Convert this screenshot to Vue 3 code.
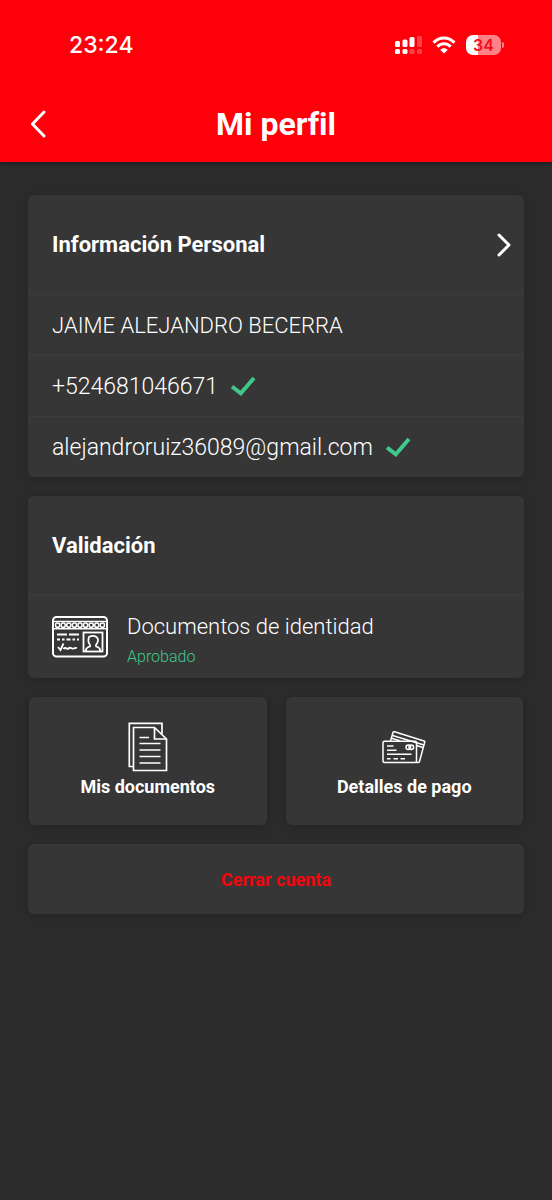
<script setup>
const contactRows = [
  { text: 'JAIME ALEJANDRO BECERRA', verified: false, kind: 'name' },
  { text: '+524681046671', verified: true, kind: 'phone' },
  { text: 'alejandroruiz36089@gmail.com', verified: true, kind: 'email' },
]
const rings = Array.from({ length: 9 }, (_, i) => 5.6 + i * 5.6)
</script>

<template>
  <div class="screen">
    <header class="header">
      <div class="status">
        <span class="time">23:24</span>
        <div class="indicators">
          <svg width="27" height="18" viewBox="0 0 27 18" fill="#fff" aria-hidden="true">
            <rect x="0" y="5" width="5" height="6" rx="1.5" />
            <rect x="7.500" y="3.500" width="5" height="7.500" rx="1.500" />
            <rect x="14.500" y="1" width="5" height="10" rx="1.5" />
            <rect x="22" y="0" width="5" height="11" rx="1.5" opacity=".25" />
            <rect x="0" y="13" width="5" height="5" rx="1.5" />
            <rect x="7.500" y="13" width="5" height="5" rx="1.5" />
            <rect x="14.500" y="13" width="5" height="5" rx="1.5" opacity=".25" />
            <rect x="22" y="13" width="5" height="5" rx="1.5" opacity=".25" />
          </svg>
          <svg width="24" height="18" viewBox="0 0 24 18" fill="none" stroke="#fff" stroke-width="3" aria-hidden="true">
            <path d="M1.5 6.6C7.5.3 16.5.3 22.5 6.6" />
            <path d="M5.3 10.6c3.900-3.900 9.500-3.900 13.400 0" />
            <path d="M8.200 13.800c2.300-2.100 5.300-2.100 7.600 0L12 17.500z" fill="#fff" stroke="none" />
          </svg>
          <span class="battery">34</span>
        </div>
      </div>
      <div class="titlebar">
        <button class="back" type="button" aria-label="Volver">
          <svg width="16" height="28" viewBox="0 0 16 28" fill="none" stroke="#fff" stroke-width="3" stroke-linecap="round" stroke-linejoin="round">
            <path d="M14 2 2.500 14 14 26" />
          </svg>
        </button>
        <h1>Mi perfil</h1>
      </div>
    </header>

    <main class="content">
      <section class="card">
        <button class="card-head" type="button">
          <span>Información Personal</span>
          <svg width="14" height="24" viewBox="0 0 14 24" fill="none" stroke="#fff" stroke-width="3" stroke-linecap="round" stroke-linejoin="round" aria-hidden="true">
            <path d="M2 2 12 12 2 22" />
          </svg>
        </button>
        <div v-for="row in contactRows" :key="row.kind" class="row" :class="row.kind">
          <span>{{ row.text }}</span>
          <svg v-if="row.verified" width="26" height="20" viewBox="0 0 26 20" fill="none" stroke="#3fc88a" stroke-width="4" role="img" aria-label="Verificado">
            <path d="M2 10.500 10.800 17.300 24 2" stroke-linecap="butt" />
          </svg>
        </div>
      </section>

      <section class="card">
        <h2 class="card-head">Validación</h2>
        <a class="identity" href="#documentos">
          <svg width="56" height="42" viewBox="0 0 56 42" fill="none" stroke="#fff" stroke-width="2" aria-hidden="true">
            <rect x="1" y="1" width="54" height="39.500" rx="3.500" />
            <path d="M1 5.500h54M1 12.800h54" stroke-width="1.500" />
            <circle v-for="x in rings" :key="x" :cx="x" cy="9.200" r="2.100" stroke-width="1.500" />
            <path d="M5 18.500h10M17 18.500h10" />
            <path d="M5 23.500h3M10 23.500h2.500M14.500 23.500h4M20.500 23.500h2.500M25 23.500h2" />
            <path d="M6 31l2.500 3 3-6.500M11.500 33c2-3 3.500 1 5-.5s2.500-.5 3.500 0 3-1 5-.5" stroke-width="1.800" />
            <rect x="31.500" y="16.500" width="19" height="19" stroke-width="1.800" />
            <path d="M34 35v-1.500c.5-2 2-2.500 4-3 .5-1 .2-1.700-.5-2.500-1.200-1.500-1.500-4-.5-7l2-.8c3-1 6.500.2 7 3.300.2 2-.5 3.500-1.500 4.500-.7.800-.9 1.600-.3 2.500 2 .5 3.300 1 3.800 3V35" stroke-width="1.800" />
          </svg>
          <span class="identity-text">
            <span class="identity-title">Documentos de identidad</span>
            <span class="approved">Aprobado</span>
          </span>
        </a>
      </section>

      <nav class="tiles">
        <button class="card tile" type="button">
          <svg width="40" height="50" viewBox="0 0 40 50" fill="none" stroke="#fff" stroke-width="1.700" aria-hidden="true">
            <path d="M5 44.500H1.300V1.300H34V12" />
            <path d="M5.500 5.500H26.500L38.500 17V48.500H5.500zM26.500 5.500V17H38.500" />
            <path d="M11.500 15.500h9.500M11.500 21.500h21M11.500 28h21M11.500 34.500h21M11.500 41h21" />
          </svg>
          <span>Mis documentos</span>
        </button>
        <button class="card tile" type="button">
          <svg width="44" height="50" viewBox="0 0 44 50" fill="none" stroke="#fff" stroke-width="1.500" stroke-linejoin="round" aria-hidden="true">
            <path d="M8.500 19 11 10.500q.3-1 1.500-.7L42 19q1 .3.700 1.300L37.500 39.500q-.3 1-1.500 1H34" />
            <path d="M10.500 13.500 42 23M9.500 16.300l9 2.700M34.500 23.500l6.500 2" />
            <rect x="1" y="19.300" width="33.500" height="21.200" rx="1.500" />
            <path d="M5 24h6.500M5 28.200h9.500M5 32.300h24.500M5 36.700h3.500M11.500 36.700H16M18.500 36.700H23" />
            <circle cx="26.300" cy="25.300" r="2.300" />
            <circle cx="29.300" cy="25.300" r="2.300" />
          </svg>
          <span>Detalles de pago</span>
        </button>
      </nav>

      <button class="card close" type="button">Cerrar cuenta</button>
    </main>
  </div>
</template>

<style>
body {
  background: #2b2b2b;
}
</style>

<style scoped>
.screen {
  min-height: 100vh;
  background: #2b2b2b;
  color: #fff;
  font-family: Roboto, "Open Sans", sans-serif;
  font-variant-ligatures: none;
}
button {
  border: 0;
  margin: 0;
  padding: 0;
  background: none;
  color: inherit;
  font: inherit;
  cursor: pointer;
}
svg {
  display: block;
  flex: none;
}
.header {
  background: #ff000a;
  box-shadow: 0 1px 4px rgba(0, 0, 0, 0.5);
}
.status {
  display: flex;
  align-items: center;
  justify-content: space-between;
  height: 90px;
  padding: 0 48px 0 69px;
}
.time {
  font: 500 23px/28px Inter, sans-serif;
}
.indicators {
  display: flex;
  align-items: center;
  gap: 10px;
}
.battery {
  position: relative;
  width: 35px;
  height: 20px;
  border-radius: 7px;
  background: linear-gradient(90deg, #fff 34%, #ff8288 34%);
  color: #f0101c;
  font: 600 16px/20px Inter, sans-serif;
  text-align: center;
  margin-right: 3px;
}
.battery::after {
  content: "";
  position: absolute;
  right: -3px;
  top: 7px;
  width: 2px;
  height: 6px;
  border-radius: 0 2px 2px 0;
  background: #ff8288;
}
.titlebar {
  display: grid;
  grid-template-columns: 46px 1fr 46px;
  align-items: center;
  height: 68px;
  padding-bottom: 4px;
}
.back {
  display: flex;
  justify-content: flex-end;
  padding: 4px 0;
}
h1 {
  margin: 0;
  font-size: 32px;
  line-height: 40px;
  font-weight: 700;
  text-align: center;
}
.content {
  display: flex;
  flex-direction: column;
  gap: 19px;
  padding: 33px 28px;
}
.card {
  border-radius: 6px;
  background: #363636;
  box-shadow: 0 2px 8px rgba(0, 0, 0, 0.15);
}
.card-head {
  display: flex;
  align-items: center;
  justify-content: space-between;
  width: 100%;
  height: 99px;
  margin: 0;
  padding: 0 13px 0 24px;
  box-sizing: border-box;
  font-size: 22px;
  line-height: 28px;
  font-weight: 700;
}
.row {
  display: flex;
  align-items: center;
  gap: 12px;
  height: 60px;
  padding: 0 24px;
  border-top: 1px solid #3d3d3d;
  font-size: 23px;
  font-weight: 300;
}
.row.name {
  font-size: 22px;
}
.identity {
  display: flex;
  align-items: center;
  gap: 19px;
  height: 82px;
  padding: 0 24px;
  border-top: 1px solid #3d3d3d;
  color: inherit;
  text-decoration: none;
  font-weight: 300;
}
.identity-text {
  display: flex;
  flex-direction: column;
  padding-top: 4px;
}
.identity-title {
  font-size: 22px;
  line-height: 36px;
}
.approved {
  color: #3fc88a;
  font-size: 16px;
  line-height: 24px;
}
.tiles {
  display: grid;
  grid-template-columns: 1fr 1fr;
  gap: 19px;
  padding: 0 1px;
}
.tile {
  display: flex;
  flex-direction: column;
  align-items: center;
  gap: 3px;
  height: 128px;
  padding-top: 25px;
  font-size: 18px;
  line-height: 24px;
  font-weight: 700;
}
.close {
  height: 70px;
  color: #f0060e;
  font-size: 18px;
  font-weight: 700;
}
</style>
